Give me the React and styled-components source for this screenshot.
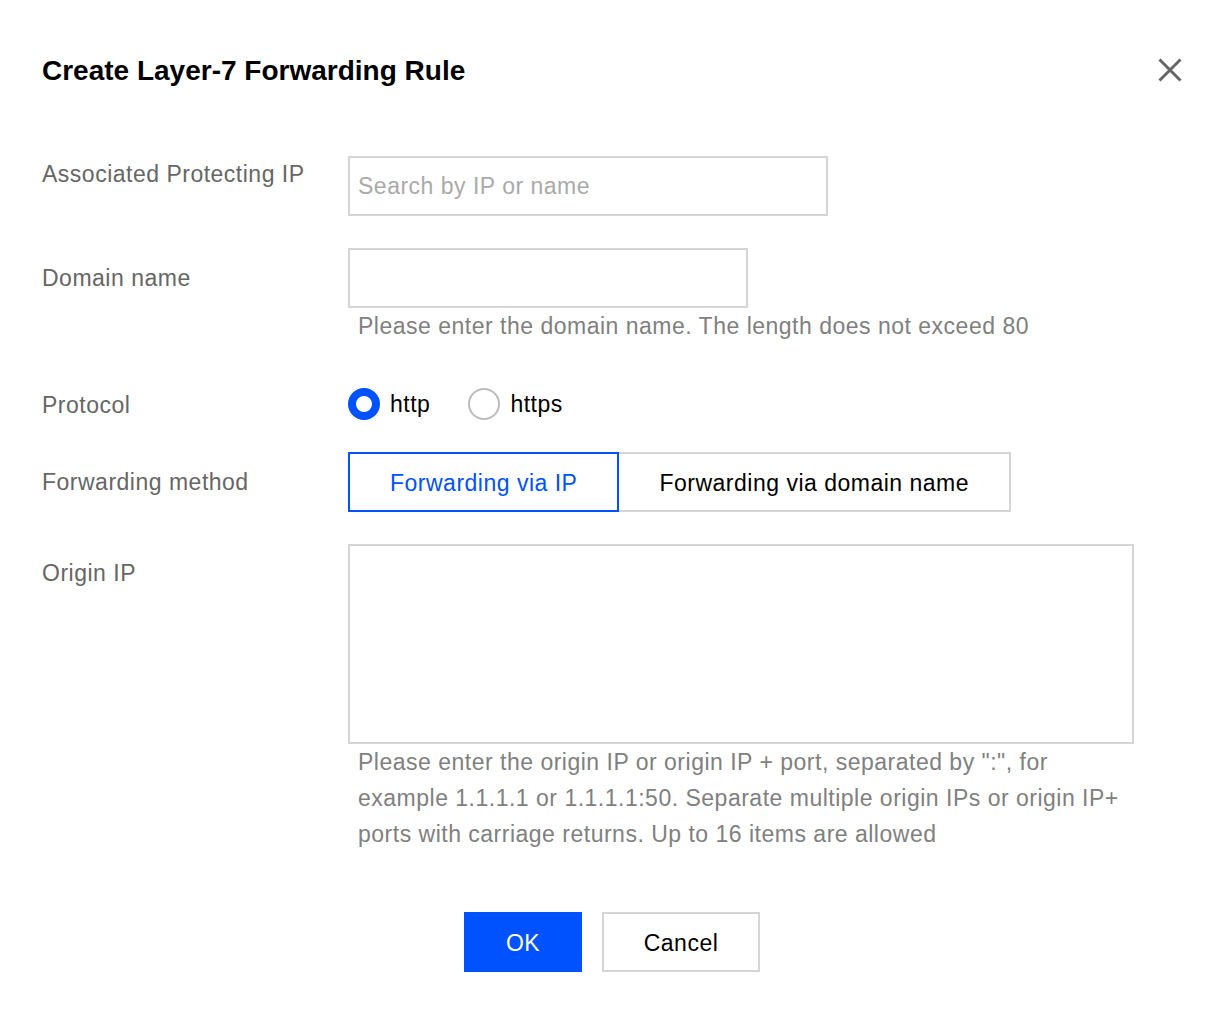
import React, { useState } from "react";
import styled, { createGlobalStyle } from "styled-components";

const Global = createGlobalStyle`
  html, body { margin: 0; padding: 0; background: #fff; }
  body { font-family: "Liberation Sans", Arial, Helvetica, sans-serif; }
  * { box-sizing: border-box; }
`;

const textStyle = `
  font-size: 23px;
  letter-spacing: 0.5px;
`;

const Dialog = styled.div`
  width: 1224px;
  min-height: 1010px;
  background: #fff;
  padding: 50px 42px 0 42px;
`;

const Header = styled.div`
  display: flex;
  justify-content: space-between;
  align-items: center;
  height: 40px;
`;

const Title = styled.h1`
  margin: 0;
  font-size: 28px;
  font-weight: 700;
  color: #000;
  line-height: 40px;
  padding-top: 2px;
`;

const CloseButton = styled.button`
  border: none;
  background: none;
  padding: 0;
  width: 24px;
  height: 24px;
  display: flex;
  cursor: pointer;
`;

const Form = styled.div`
  margin-top: 66px;
  display: flex;
  flex-direction: column;
`;

const Row = styled.div`
  display: grid;
  grid-template-columns: 306px 1fr;
  margin-bottom: ${(p) => p.$gap}px;
`;

const Label = styled.div`
  ${textStyle}
  color: #666;
  line-height: 36px;
  white-space: nowrap;
  padding-top: ${(p) => p.$top}px;
`;

const Control = styled.div`
  display: flex;
  flex-direction: column;
  align-items: flex-start;
`;

const Input = styled.input`
  width: ${(p) => p.$w}px;
  height: 60px;
  border: 2px solid #d5d5d5;
  padding: 0 8px;
  ${textStyle}
  font-family: inherit;
  color: #000;
  outline: none;
  &::placeholder { color: #aaa; }
`;

const TextArea = styled.textarea`
  width: 786px;
  height: 200px;
  border: 2px solid #d5d5d5;
  padding: 8px;
  ${textStyle}
  font-family: inherit;
  resize: none;
  outline: none;
  display: block;
`;

const Hint = styled.div`
  ${textStyle}
  color: #808080;
  line-height: 36px;
  padding-left: 10px;
  max-width: ${(p) => p.$w || 786}px;
`;

const RadioGroup = styled.div`
  display: flex;
  align-items: center;
  height: 60px;
  gap: 38px;
`;

const RadioItem = styled.label`
  display: flex;
  align-items: center;
  gap: 10px;
  ${textStyle}
  color: #000;
  cursor: pointer;
`;

const RadioCircle = styled.span`
  width: 32px;
  height: 32px;
  border-radius: 50%;
  background: #fff;
  border: ${(p) => (p.$checked ? "8px solid #0052ff" : "2px solid #bbb")};
`;

const Segmented = styled.div`
  display: flex;
  height: 60px;
`;

const Segment = styled.button`
  height: 60px;
  padding: 3px ${(p) => p.$pad}px 0;
  ${textStyle}
  font-family: inherit;
  background: #fff;
  cursor: pointer;
  color: ${(p) => (p.$active ? "#0052ff" : "#000")};
  border: 2px solid ${(p) => (p.$active ? "#0052ff" : "#d5d5d5")};
  border-left-width: ${(p) => (p.$active ? "2px" : "0")};
`;

const Footer = styled.div`
  display: flex;
  justify-content: center;
  gap: 20px;
  margin-top: 60px;
`;

const Button = styled.button`
  height: 60px;
  width: ${(p) => p.$w}px;
  ${textStyle}
  font-family: inherit;
  cursor: pointer;
  padding: 3px 0 0;
  background: ${(p) => (p.$primary ? "#0052ff" : "#fff")};
  color: ${(p) => (p.$primary ? "#fff" : "#000")};
  border: 2px solid ${(p) => (p.$primary ? "#0052ff" : "#d5d5d5")};
`;

export default function App() {
  const [proto, setProto] = useState("http");
  const [method, setMethod] = useState("ip");
  return (
    <>
      <Global />
      <Dialog>
        <Header>
          <Title>Create Layer-7 Forwarding Rule</Title>
          <CloseButton aria-label="close">
            <svg width="24" height="24" viewBox="0 0 24 24">
              <path d="M1.5 1.5 L22.5 22.5 M22.5 1.5 L1.5 22.5" stroke="#666" strokeWidth="3" />
            </svg>
          </CloseButton>
        </Header>
        <Form>
          <Row $gap={32}>
            <Label $top={0}>Associated Protecting IP</Label>
            <Control>
              <Input $w={480} placeholder="Search by IP or name" />
            </Control>
          </Row>
          <Row $gap={30}>
            <Label $top={12}>Domain name</Label>
            <Control>
              <Input $w={400} />
              <Hint $w={900}>Please enter the domain name. The length does not exceed 80</Hint>
            </Control>
          </Row>
          <Row $gap={18}>
            <Label $top={13}>Protocol</Label>
            <Control>
              <RadioGroup>
                <RadioItem onClick={() => setProto("http")}>
                  <RadioCircle $checked={proto === "http"} />
                  http
                </RadioItem>
                <RadioItem onClick={() => setProto("https")}>
                  <RadioCircle $checked={proto === "https"} />
                  https
                </RadioItem>
              </RadioGroup>
            </Control>
          </Row>
          <Row $gap={32}>
            <Label $top={12}>Forwarding method</Label>
            <Control>
              <Segmented>
                <Segment $pad={40} $active={method === "ip"} onClick={() => setMethod("ip")}>
                  Forwarding via IP
                </Segment>
                <Segment $pad={40} $active={method === "domain"} onClick={() => setMethod("domain")}>
                  Forwarding via domain name
                </Segment>
              </Segmented>
            </Control>
          </Row>
          <Row $gap={0}>
            <Label $top={11}>Origin IP</Label>
            <Control>
              <TextArea />
              <Hint $w={786}>
                Please enter the origin IP or origin IP + port, separated by ":", for example 1.1.1.1 or 1.1.1.1:50. Separate multiple origin IPs or origin IP+ ports with carriage returns. Up to 16 items are allowed
              </Hint>
            </Control>
          </Row>
        </Form>
        <Footer>
          <Button $primary $w={118}>OK</Button>
          <Button $w={158}>Cancel</Button>
        </Footer>
      </Dialog>
    </>
  );
}
